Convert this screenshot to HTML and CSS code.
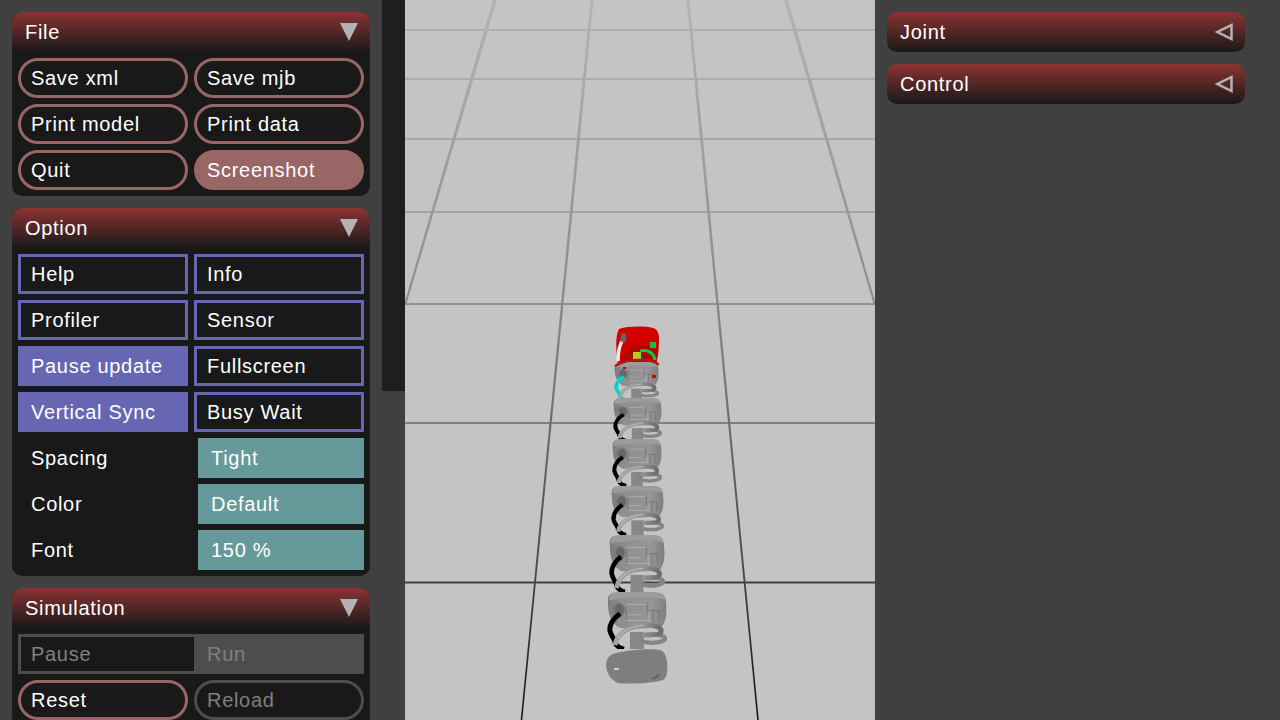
FILE: index.html
```html
<!DOCTYPE html>
<html lang="en">
<head>
<meta charset="utf-8">
<title>MuJoCo simulate</title>
<link rel="stylesheet" href="styles.css">
</head>
<body>
<div class="app">
  <aside class="sidebar">
    <section class="panel">
      <header class="title"><span>File</span><svg class="tri" viewBox="0 0 18 18"><path class="tri-open" d="M0 0H18L9 18Z"/></svg></header>
      <div class="grid">
        <div class="btn pill">Save xml</div><div class="btn pill">Save mjb</div>
        <div class="btn pill">Print model</div><div class="btn pill">Print data</div>
        <div class="btn pill">Quit</div><div class="btn pill on">Screenshot</div>
      </div>
    </section>
    <section class="panel">
      <header class="title"><span>Option</span><svg class="tri" viewBox="0 0 18 18"><path class="tri-open" d="M0 0H18L9 18Z"/></svg></header>
      <div class="grid">
        <div class="btn chk">Help</div><div class="btn chk">Info</div>
        <div class="btn chk">Profiler</div><div class="btn chk">Sensor</div>
        <div class="btn chk on">Pause update</div><div class="btn chk">Fullscreen</div>
        <div class="btn chk on">Vertical Sync</div><div class="btn chk">Busy Wait</div>
        <div class="label">Spacing</div><div class="select">Tight</div>
        <div class="label">Color</div><div class="select">Default</div>
        <div class="label">Font</div><div class="select">150 %</div>
      </div>
    </section>
    <section class="panel">
      <header class="title"><span>Simulation</span><svg class="tri" viewBox="0 0 18 18"><path class="tri-open" d="M0 0H18L9 18Z"/></svg></header>
      <div class="grid">
        <div class="radio"><div class="radio-a">Pause</div><div class="radio-b">Run</div></div>
        <div class="btn pill">Reset</div><div class="btn pill off">Reload</div>
      </div>
    </section>
  </aside>
  <div class="strip"></div>
  <main class="viewport">
    <svg class="scene" viewBox="405 0 470 720" width="470" height="720">
      <defs>
        <linearGradient id="gl" gradientUnits="userSpaceOnUse" x1="0" y1="0" x2="0" y2="720">
          <stop offset="0" stop-color="#b4b4b4"/>
          <stop offset="0.42" stop-color="#8a8a8a"/>
          <stop offset="0.8" stop-color="#484848"/>
          <stop offset="1" stop-color="#181818"/>
        </linearGradient>
        <linearGradient id="coilg" x1="0" y1="0" x2="1" y2="0">
          <stop offset="0" stop-color="#a4a4a4"/>
          <stop offset="0.6" stop-color="#949494"/>
          <stop offset="1" stop-color="#6c6c6c"/>
        </linearGradient>
        <linearGradient id="bodyg" x1="0" y1="0" x2="1" y2="0">
          <stop offset="0" stop-color="#7a7a7a"/>
          <stop offset="0.2" stop-color="#8e8e8e"/>
          <stop offset="0.75" stop-color="#969696"/>
          <stop offset="1" stop-color="#7e7e7e"/>
        </linearGradient>
        <filter id="soft" x="-5%" y="-5%" width="110%" height="110%"><feGaussianBlur stdDeviation="0.4"/></filter>
        <symbol id="seg" viewBox="0 0 60 60" preserveAspectRatio="none">
          <path class="body" d="M5 1C20-1 44-1 53 1C57 2 59 6 59 12C60 22 59 31 55 36C42 39 24 39 13 38C5 33 1 26 1 12C0 6 2 2 5 1Z"/>
          <path class="body-top" d="M5 1C20-1 44-1 53 1C56 2 58 4 58.500 8C44 4 18 5 2 9C2 5 3 2 5 1Z"/>
          <ellipse class="hole-rim" cx="11.500" cy="19" rx="6.500" ry="8"/>
          <ellipse class="hole" cx="12" cy="19" rx="4.500" ry="6"/>
          <path class="mark" d="M20 13H40M21 24H34M42 22V31M20 30H44"/>
          <path class="mark-d" d="M40 12V24M43 19L52 20V31M46 19V32M19 15V29"/>
          <path class="tube" d="M13 23C7 27 2 34 3 41C4 47 8 49 8 53C9 57 13 59 17 60"/>
          <rect class="col" x="23" y="42" width="14" height="18"/>
          <ellipse class="ring" cx="45" cy="49" rx="13" ry="4.500"/>
          <path class="coil" d="M8 56C10 43 24 35 38 35C48 35 55 37 54 42C53 45 44 46 35 45"/>
          <path class="coil-hi" d="M11 49C15 41 25 36 37 35"/>
        </symbol>
      </defs>
      <g filter="url(#soft)">
        <path class="h h1" d="M405 30H875"/>
        <path class="h h2" d="M405 79H875"/>
        <path class="h h3" d="M405 139H875"/>
        <path class="h h4" d="M405 212H875"/>
        <path class="h h5" d="M405 304H875"/>
        <path class="h h6" d="M405 423H875"/>
        <path class="h h7" d="M405 582.500H875"/>
        <path class="v" d="M493 0H497L406 305H404Z"/>
        <path class="v" d="M590.500 0H593.500L522.300 720H520.700Z"/>
        <path class="v" d="M686.500 0H689.500L758.800 720H757.200Z"/>
        <path class="v" d="M784 0H788L876 305H874Z"/>
      </g>
      <path class="head" d="M619 329C628 326 645 326 653 328C657 329 659 333 659 338C659 349 658 358 656 364L618 365C616 352 615 336 619 329Z"/>
      <path class="head-dark" d="M622 358C630 343 650 343 658 350L656 364L620 365Z"/>
      <path class="tube-white" d="M624 339C619 344 618 352 618 361"/>
      <ellipse class="hole" cx="623.500" cy="338" rx="3" ry="5"/>
      <path class="green" d="M650 342H656V348H650Z"/>
      <path class="lime" d="M633 352H641V359H633Z"/>
      <path class="arc-green" d="M640 351C648 349 654 353 655 360"/>
      <path class="blue" d="M641 356H644V359H641Z"/>
      <use class="cyan" href="#seg" x="614" y="362" width="45" height="38"/>
      <path class="rim" d="M615 366C625 360 632 360 639 360C648 360 656 361 658.500 365"/>
      <path class="head" d="M623 367H626V369H623ZM652 375H656V378H652Z"/>
      <use href="#seg" x="613" y="398" width="49" height="43"/>
      <use href="#seg" x="612" y="439" width="50" height="47"/>
      <use href="#seg" x="611" y="486" width="53" height="49"/>
      <use href="#seg" x="609" y="535" width="56" height="57"/>
      <use href="#seg" x="607" y="592" width="60" height="57"/>
      <path class="base" d="M613 654C625 650 650 648 660 650C664 651 666 655 667 662C668 670 667 678 663 680C650 684 625 684 618 683C611 680 607 674 606 666C606 660 608 656 613 654Z"/>
      <path class="base-dark" d="M651 678L659 674L660 676L653 680Z"/>
      <path class="base-light" d="M614 668H619V670H614Z"/>
    </svg>
  </main>
  <aside class="sidebar right">
    <section class="panel">
      <header class="title closed"><span>Joint</span><svg class="tri" viewBox="0 0 18 18"><path class="tri-closed" d="M16.500 2V16L2.500 9Z"/></svg></header>
    </section>
    <section class="panel">
      <header class="title closed"><span>Control</span><svg class="tri" viewBox="0 0 18 18"><path class="tri-closed" d="M16.500 2V16L2.500 9Z"/></svg></header>
    </section>
  </aside>
</div>
</body>
</html>
```
FILE: styles.css
```css
* { box-sizing: border-box; }
html, body { margin: 0; height: 100%; overflow: hidden; }
body {
  background: #404040;
  color: #fff;
  font-family: "Liberation Sans", Arial, sans-serif;
  font-size: 20px;
  letter-spacing: 0.7px;
  line-height: 1;
}
.app { display: flex; height: 720px; overflow: hidden; align-items: flex-start; }
.sidebar {
  flex: none;
  width: 382px;
  padding: 12px 12px 0;
  display: flex;
  flex-direction: column;
  gap: 12px;
}
.sidebar.right { width: 405px; padding-right: 35px; }
.strip { flex: none; width: 23px; height: 391px; background: #1e1e1e; }
.viewport { flex: none; width: 470px; height: 720px; background: #c4c4c4; }
.scene { display: block; }

.panel { background: #191919; border-radius: 10px; flex: none; overflow: hidden; }
.title {
  height: 40px;
  display: flex;
  align-items: center;
  justify-content: space-between;
  padding: 0 12px 0 13px;
  background: linear-gradient(#8c3333, #191919);
}
.title.closed { padding-left: 13px; }
.tri { width: 18px; height: 18px; display: block; }
.tri-open { fill: #b3b3b3; }
.tri-closed { fill: none; stroke: #b3b3b3; stroke-width: 2.500; }

.grid {
  display: grid;
  grid-template-columns: 170px 170px;
  gap: 6px;
  padding: 6px;
}
.btn, .label, .select {
  height: 40px;
  display: flex;
  align-items: center;
}
.btn { padding-left: 10px; border: 3px solid #996666; }
.pill { border-radius: 20px; }
.pill.on { background: #996666; }
.pill.off { border-color: #4d4d4d; color: #808080; }
.chk { border-color: #6666b3; }
.chk.on { background: #6666b3; }
.label { padding-left: 13px; }
.select { margin-left: 4px; padding-left: 13px; background: #669999; }
.radio {
  grid-column: 1 / -1;
  height: 40px;
  display: flex;
  background: #4d4d4d;
  color: #808080;
}
.radio-a {
  width: 173px;
  margin: 3px 0 3px 3px;
  padding-left: 10px;
  background: #191919;
  display: flex;
  align-items: center;
}
.radio-b { padding-left: 13px; display: flex; align-items: center; }

.h { fill: none; stroke-width: 1.6; }
.h1 { stroke: #a8a8a8; }
.h2 { stroke: #a4a4a4; }
.h3 { stroke: #9e9e9e; }
.h4 { stroke: #969696; }
.h5 { stroke: #7e7e7e; }
.h6 { stroke: #686868; }
.h7 { stroke: #404040; stroke-width: 2; }
.v { fill: url(#gl); }

.head { fill: #d40000; }
.head-dark { fill: #a80808; }
.tube-white { fill: none; stroke: #e8e8e8; stroke-width: 3.500; }
.green { fill: #18c030; }
.lime { fill: #b0d020; }
.arc-green { fill: none; stroke: #20c040; stroke-width: 3; }
.blue { fill: #2030c0; }
.rim { fill: none; stroke: #c01010; stroke-width: 2.500; }

.ring { fill: none; stroke: #858585; stroke-width: 4.500; }
.col { fill: #888; }
.coil { fill: none; stroke: url(#coilg); stroke-width: 5; }
.coil-hi { fill: none; stroke: #b8b8b8; stroke-width: 1.2; }
.tube { fill: none; stroke: var(--tube, #000); stroke-width: 5; }
.cyan { --tube: #00d4d4; }
.body { fill: url(#bodyg); }
.body-top { fill: #9c9c9c; }
.hole-rim { fill: #7a7a7a; }
.hole { fill: #666; }
.mark { fill: none; stroke: #b8b8b8; stroke-width: 0.8; }
.mark-d { fill: none; stroke: #747474; stroke-width: 1; }
.base { fill: #7e7e7e; }
.base-dark { fill: #666; }
.base-light { fill: #d0d0d0; }
```
